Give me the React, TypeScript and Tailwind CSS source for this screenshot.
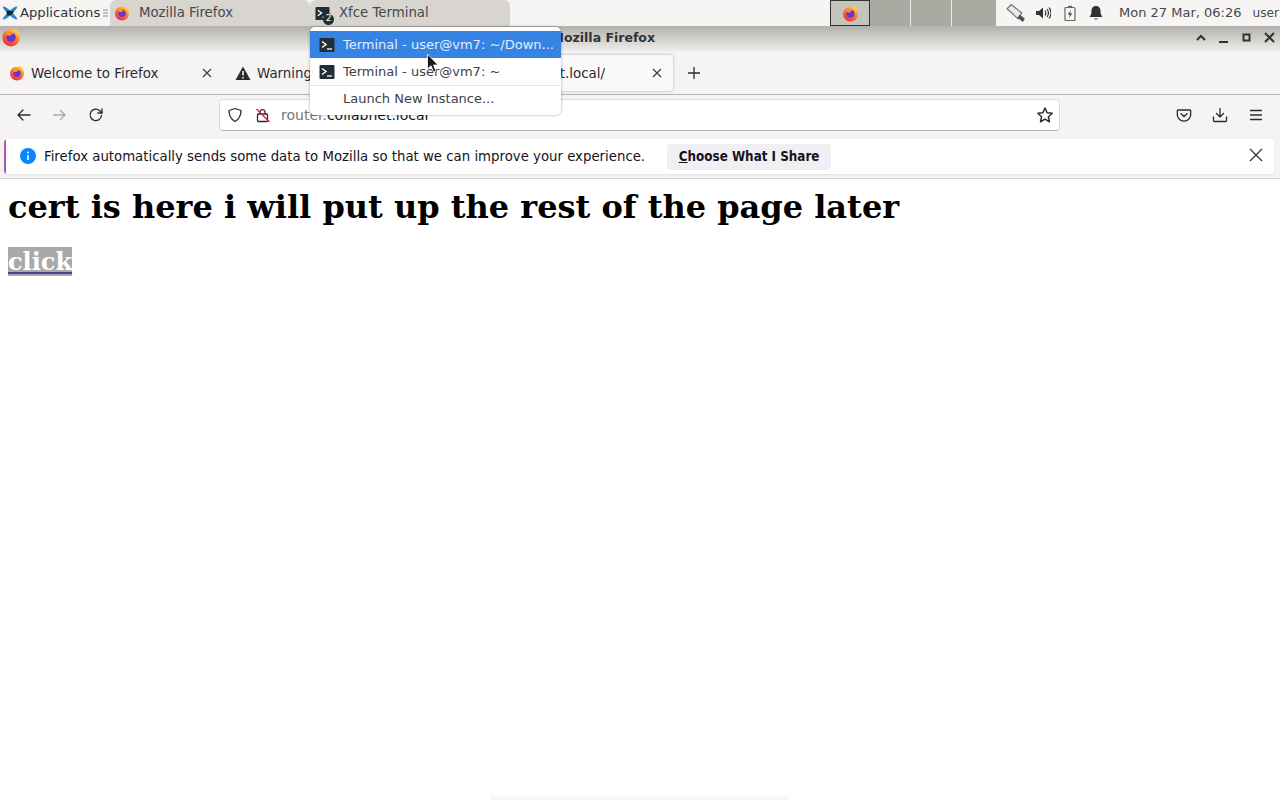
const sans = "font-['DejaVu_Sans',sans-serif]";

function Fox({ size = 16 }: { size?: number }) {
  return (
    <svg width={size} height={size} viewBox="0 0 32 32" className="shrink-0">
      <defs>
        <linearGradient id="fx" x1="0.8" y1="0" x2="0.2" y2="1">
          <stop offset="0" stopColor="#ffd54a" />
          <stop offset="0.45" stopColor="#ff7a2b" />
          <stop offset="1" stopColor="#e6244f" />
        </linearGradient>
      </defs>
      <circle cx="16" cy="17" r="14" fill="url(#fx)" />
      <path d="M22 2c4 3 8 8 8 14-2-5-5-8-8-9z" fill="#ffcf3c" />
      <circle cx="16" cy="16.5" r="7.5" fill="#6b35c8" />
      <path d="M8 12c3-3 9-4 13-1-4 0-5 1-6 3-2 0-5 0-7-2z" fill="#ff9a2e" />
    </svg>
  );
}

function TermIcon({ size = 16 }: { size?: number }) {
  return (
    <svg width={size} height={size} viewBox="0 0 16 16" className="shrink-0">
      <rect x="0.5" y="1" width="15" height="14" rx="1" fill="#232d38" />
      <path d="M3 4.5 7 7.5 3 10.5" fill="none" stroke="#fff" strokeWidth="1.4" />
      <path d="M8 12h5" stroke="#fff" strokeWidth="1.3" />
    </svg>
  );
}

function Stroke({ children, size = 16, className = "" }: { children: React.ReactNode; size?: number; className?: string }) {
  return (
    <svg width={size} height={size} viewBox="0 0 16 16" fill="none" stroke="#2b2a33" strokeWidth="1.3" strokeLinecap="round" strokeLinejoin="round" className={`shrink-0 ${className}`}>
      {children}
    </svg>
  );
}

function CloseX({ className = "" }: { className?: string }) {
  return (
    <svg width="10" height="10" viewBox="0 0 10 10" className={`shrink-0 ${className}`}>
      <path d="M1 1 9 9M9 1 1 9" stroke="#3a3944" strokeWidth="1.1" />
    </svg>
  );
}

function Panel() {
  return (
    <div className="flex h-[26px] items-stretch bg-[#f6f5f4] text-[13.3px] text-[#2e3436] whitespace-nowrap">
      <div className="flex w-[110px] shrink-0 items-center pl-[2px]">
        <svg width="16" height="16" viewBox="0 0 16 16" className="shrink-0">
          <path d="M0.500 1.500c3 0 5.500 2 7.500 4 2-2 4.500-4 7.500-4-1 3-3 4.500-5 6.500 2 2 4 3.500 5 6.500-3 0-5.500-2-7.500-4-2 2-4.500 4-7.500 4 1-3 3-4.500 5-6.500-2-2-4-3.500-5-6.500z" fill="#2a86c8" />
          <path d="M4.500 6c2.500-.5 5-.5 7.500.5-1 2.500-3.500 4-6.500 4-1-1.500-1-3-1-4.500z" fill="#16222e" />
        </svg>
        <span className="ml-[2px] text-[13.15px]">Applications</span>
        <svg width="6" height="12" viewBox="0 0 6 12" className="ml-[3px] shrink-0">
          <path d="M0 3h5M0 6h5M0 9h5" stroke="#8a8a88" strokeWidth="1" />
        </svg>
      </div>
      <div className="flex w-[200px] shrink-0 items-center rounded-t-[6px] bg-[#d8d4cf] pl-[4px]">
        <Fox size={16} />
        <span className="ml-[9px] text-[#46494b]">Mozilla Firefox</span>
      </div>
      <div className="flex w-[200px] shrink-0 items-center rounded-t-[6px] bg-[#d8d4cf] pl-[5px]">
        <span className="relative">
          <TermIcon size={15} />
          <span className="absolute left-[8px] top-[8px] flex h-[11px] w-[11px] items-center justify-center rounded-full bg-[#232d38] text-[9px] text-white">2</span>
        </span>
        <span className="ml-[9px] text-[#46494b]">Xfce Terminal</span>
      </div>
      <div className="w-[320px] shrink-0" />
      <div className="flex w-[166px] shrink-0 bg-[#aaa9a2]">
        <div className="flex w-[40px] items-center justify-center border border-[#333] bg-[#c4c3be]">
          <Fox size={17} />
        </div>
        <div className="w-[41px] border-r border-[#e8e8e4]" />
        <div className="w-[41px] border-r border-[#e8e8e4]" />
        <div className="flex-1" />
      </div>
      <div className="flex min-w-0 flex-1 items-center pl-[10px]">
        <svg width="21" height="21" viewBox="0 0 20 20" className="shrink-0">
          <path d="M1 5.500 5 1.500l10 8-3.500 5.500z" fill="#eaeae6" stroke="#6f7173" strokeWidth="1.100" />
          <path d="M13 11l5 4-2 3-5-4z" fill="#4c5053" />
        </svg>
        <svg width="16" height="16" viewBox="0 0 16 16" className="ml-[8px] shrink-0">
          <path d="M1 6h3l4-3.500v11L4 10H1z" fill="#2e3436" />
          <path d="M10 5.500c1 1.500 1 3.500 0 5M12 4c1.800 2.400 1.800 5.600 0 8M14 2.500c2.600 3.500 2.600 7.500 0 11" fill="none" stroke="#2e3436" strokeWidth="1.200" />
        </svg>
        <svg width="14" height="16" viewBox="0 0 14 16" className="ml-[12px] shrink-0">
          <rect x="2" y="2.500" width="10" height="13" rx="1" fill="none" stroke="#666" strokeWidth="1.200" />
          <rect x="5" y="0.800" width="4" height="2" fill="#666" />
          <path d="M8 5 4.800 9.500H7L6 13l3.200-4.500H7z" fill="#2e3436" />
        </svg>
        <svg width="14" height="16" viewBox="0 0 14 16" className="ml-[12px] shrink-0">
          <path d="M7 1c3 0 4.500 2.300 4.500 5 0 3 .8 4.500 2 6H.5c1.200-1.500 2-3 2-6C2.500 3.300 4 1 7 1z" fill="#2e3436" />
          <path d="M5.200 13.500h3.600c-.4 1.400-3.200 1.400-3.600 0z" fill="#2e3436" />
        </svg>
        <span className="ml-[16px] text-[13px] text-[#46494b]">Mon 27 Mar, 06:26</span>
        <span className="ml-[11px] text-[12.2px] text-[#46494b]">user</span>
      </div>
    </div>
  );
}

function TitleBar() {
  return (
    <div className="relative flex h-[25px] items-center bg-gradient-to-b from-[#b3b1ac] to-[#eeedeb] text-[12.5px]">
      <span className="absolute left-[1px] top-[1px]"><Fox size={20} /></span>
      <div className="w-[655px] text-right font-bold text-[#2e3436]">Mozilla Firefox</div>
      <div className="absolute right-[3px] top-[6px] flex items-center gap-[9px]">
        <svg width="14" height="12" viewBox="0 0 14 12"><path d="M3 8 7 4l4 4" fill="none" stroke="#2e3436" strokeWidth="2" /></svg>
        <svg width="14" height="12" viewBox="0 0 14 12"><path d="M2 10h9" stroke="#2e3436" strokeWidth="2" /></svg>
        <svg width="14" height="12" viewBox="0 0 14 12"><rect x="3.500" y="2.500" width="6" height="6" fill="none" stroke="#2e3436" strokeWidth="2" /></svg>
        <svg width="14" height="12" viewBox="0 0 14 12"><path d="M2 1l9 9M11 1l-9 9" stroke="#2e3436" strokeWidth="2" /></svg>
      </div>
    </div>
  );
}

function TabBar() {
  return (
    <div className="flex h-[44px] items-center border-b border-[#b4b3b1] bg-[#f5f4f3] pt-[1px] text-[13.4px] text-[#2b2a33] whitespace-nowrap">
      <div className="flex h-[36px] w-[224px] shrink-0 items-center pl-[9px] pr-[12px]">
        <Fox size={16} />
        <span className="ml-[6px] mt-[2px] flex-1">Welcome to Firefox</span>
        <CloseX />
      </div>
      <div className="flex h-[36px] w-[225px] shrink-0 items-center pl-[11px]">
        <svg width="16" height="16" viewBox="0 0 16 16" className="shrink-0">
          <path d="M8 1.500 15.500 15H.5z" fill="#2b2a33" />
          <path d="M8 6v4.500M8 12v1.500" stroke="#fff" strokeWidth="1.500" />
        </svg>
        <span className="ml-[6px] mt-[2px]">Warning</span>
      </div>
      <div className="flex h-[36px] w-[224px] shrink-0 items-center justify-end rounded-[4px] bg-[#fafafa] pr-[11px] shadow-[0_0_3px_rgba(0,0,0,0.3)]">
        <span className="mr-[47px] mt-[2px]">collabnet.local/</span>
        <CloseX />
      </div>
      <svg width="16" height="16" viewBox="0 0 16 16" className="ml-[13px] shrink-0">
        <path d="M8 2v12M2 8h12" stroke="#2b2a33" strokeWidth="1.300" />
      </svg>
    </div>
  );
}

function NavBar() {
  return (
    <div className="flex h-[40px] items-center bg-[#f5f4f3] text-[14px] whitespace-nowrap">
      <Stroke className="ml-[16px]"><path d="M14 8H2.500M7 3 2 8l5 5" /></Stroke>
      <svg width="16" height="16" viewBox="0 0 16 16" fill="none" stroke="#a9a9ad" strokeWidth="1.300" className="ml-[20px] shrink-0"><path d="M1 8h11.500M8 3l5 5-5 5" /></svg>
      <Stroke className="ml-[20px]"><path d="M13.500 8.500A5.700 5.700 0 1 1 11.500 3.500L14 6" /><path d="M14 1.800V6H9.800" /></Stroke>
      <div className="ml-[115px] flex h-[32px] w-[841px] shrink-0 items-center rounded-[4px] border border-[#dcdbd9] border-b-[#b5b5b3] bg-white">
        <Stroke className="ml-[7px]"><path d="M8 1.500 14 3.500c0 5-1.500 8.500-6 11-4.500-2.500-6-6-6-11z" /></Stroke>
        <svg width="16" height="16" viewBox="0 0 16 16" fill="none" strokeWidth="1.300" className="ml-[12px] shrink-0">
          <rect x="2.500" y="7" width="10" height="7.500" rx="1" stroke="#2b2a33" />
          <path d="M5 7V4.500a2.600 2.600 0 0 1 5 0V7" stroke="#2b2a33" />
          <path d="M1.500 2 14.500 15" stroke="#d7264f" strokeWidth="1.400" />
        </svg>
        <span className="ml-[10px] text-[#77767b]">router.</span>
        <span className="text-[#15141a]">collabnet.local</span>
        <Stroke size={18} className="ml-auto mr-[5px]"><path d="M8 1.800 9.900 6l4.500.5-3.400 3 1 4.500L8 11.700 4 14l1-4.500-3.400-3L6.100 6z" /></Stroke>
      </div>
      <Stroke className="ml-[116px]"><path d="M2 3h12a.7.7 0 0 1 .7.7v3.800a6.700 6.700 0 0 1-13.400 0V3.700A.7.7 0 0 1 2 3z" /><path d="M5 6.700 8 9.500l3-2.800" /></Stroke>
      <Stroke className="ml-[20px]"><path d="M8 1.500V10M4.500 6.500 8 10l3.500-3.500M1.500 10v3.500a1 1 0 0 0 1 1h11a1 1 0 0 0 1-1V10" /></Stroke>
      <Stroke className="ml-[20px]"><path d="M2.500 3.500h11M2.500 8h11M2.500 12.500h11" /></Stroke>
    </div>
  );
}

function Notice() {
  return (
    <div className="h-[44px] border-b border-[#cfcfd1] bg-[#f5f4f3] pl-[4px] pr-[6px] pt-[4px]">
      <div className="flex h-[35px] items-center overflow-hidden rounded-[4px] bg-white text-[13.3px] text-[#15141a] whitespace-nowrap shadow-[0_1px_2px_rgba(0,0,0,0.08)]">
        <div className="h-full w-[2px] shrink-0 bg-gradient-to-b from-[#d0529a] to-[#7f5bc4]" />
        <svg width="16" height="16" viewBox="0 0 16 16" className="ml-[14px] mb-[2px] shrink-0">
          <circle cx="8" cy="8" r="8" fill="#0a84ff" />
          <path d="M8 7v5" stroke="#fff" strokeWidth="1.600" />
          <circle cx="8" cy="4.500" r="1" fill="#fff" />
        </svg>
        <span className="ml-[8px]">Firefox automatically sends some data to Mozilla so that we can improve your experience.</span>
        <button className="ml-[22px] h-[26px] w-[164px] rounded-[4px] bg-[#f0f0f4] font-['DejaVu_Sans_Condensed','DejaVu_Sans',sans-serif] text-[13.3px] font-bold text-[#15141a]">
          <span className="underline">C</span>hoose What I Share
        </button>
        <svg width="14" height="14" viewBox="0 0 14 14" className="ml-auto mr-[11px] mb-[3px] shrink-0">
          <path d="M1 1l12 12M13 1 1 13" stroke="#2b2a33" strokeWidth="1.200" />
        </svg>
      </div>
    </div>
  );
}

function DockMenu() {
  const row = "flex h-[27px] items-center pl-[9px] whitespace-nowrap";
  return (
    <div className={`absolute left-[310px] top-[27px] z-10 h-[88px] w-[251px] rounded-[5px] bg-white pt-[4px] text-[13px] text-[#3d4144] shadow-[0_0_3px_rgba(0,0,0,0.35)] ${sans}`}>
      <div className={`${row} bg-[#3584e4] text-[#e4eefb]`}>
        <TermIcon />
        <span className="ml-[8px]">Terminal - user@vm7: ~/Down...</span>
      </div>
      <div className={row}>
        <TermIcon />
        <span className="ml-[8px]">Terminal - user@vm7: ~</span>
      </div>
      <div className="border-t border-[#e4e3e1]" />
      <div className="flex h-[26px] items-center pl-[33px] whitespace-nowrap">
        <span>Launch New Instance...</span>
      </div>
    </div>
  );
}

function Cursor() {
  return (
    <svg width="14" height="20" viewBox="0 0 14 20" className="absolute left-[426px] top-[53px] z-20">
      <path d="M1.500 1v15l3.500-3.300L7.600 19l2.400-1-2.500-6H12z" fill="#1a1a1a" stroke="#fff" strokeWidth="0.800" />
    </svg>
  );
}

export default function App() {
  return (
    <div className={`relative h-[800px] w-[1280px] overflow-hidden bg-white ${sans}`}>
      <Panel />
      <TitleBar />
      <TabBar />
      <NavBar />
      <Notice />
      <main className="px-[8px] font-['DejaVu_Serif',serif] text-black">
        <h1 className="mt-[8px] text-[32px] font-bold leading-[40px]">cert is here i will put up the rest of the page later</h1>
        <p className="mt-[20px] leading-[28px]">
          <a className="inline-block h-[29px] bg-[#a9a9a9] text-[24px] font-bold leading-[29px] text-white underline decoration-[#553c8b]">click</a>
        </p>
      </main>
      <DockMenu />
      <Cursor />
      <div className="absolute bottom-0 left-[490px] h-[5px] w-[300px] rounded-t-[4px] bg-gradient-to-b from-[#fdfdfd] to-[#f5f5f5]" />
    </div>
  );
}
